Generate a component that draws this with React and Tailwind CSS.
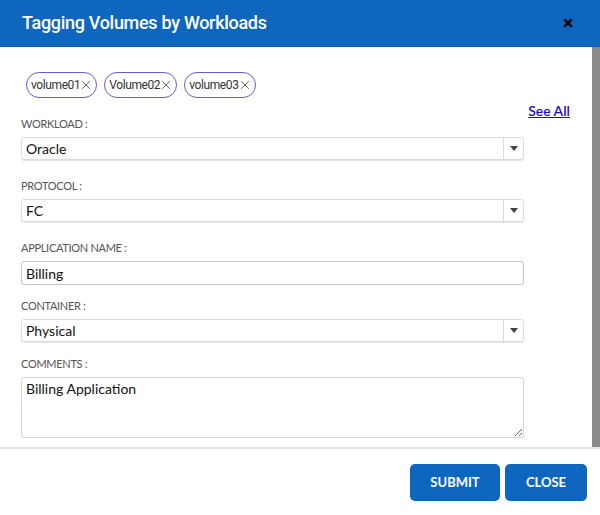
import { X } from "lucide-react";

const volumes = ["volume01", "Volume02", "volume03"];

const fields = [
  { label: "WORKLOAD :", value: "Oracle", type: "select", gap: "mt-0" },
  { label: "PROTOCOL :", value: "FC", type: "select", gap: "mt-[19px]" },
  { label: "APPLICATION NAME :", value: "Billing", type: "input", gap: "mt-[19px]" },
  { label: "CONTAINER :", value: "Physical", type: "select", gap: "mt-[14px]" },
];

function SelectBox({ value }) {
  return (
    <div className="flex h-[23px] w-[503px] items-stretch rounded-[3px] border border-[#dcdcdc] bg-white shadow-[0_1px_0_#e6e6e6]">
      <div className="flex flex-1 items-center pl-[4px] text-[14px] text-[#111]">{value}</div>
      <div className="flex w-[20px] items-center justify-center border-l border-[#dcdcdc]">
        <svg width="8" height="5" viewBox="0 0 8 5">
          <path d="M0 0h8L4 5z" fill="#444" />
        </svg>
      </div>
    </div>
  );
}

function InputBox({ value }) {
  return (
    <div className="flex h-[24px] w-[503px] items-center rounded-[3px] border border-[#c4c4c4] bg-white pl-[4px] text-[14px] text-[#111]">
      {value}
    </div>
  );
}

export default function App() {
  return (
    <div className="flex h-[515px] w-[600px] flex-col bg-white font-['Lato','Open_Sans',sans-serif]">
      <header className="flex h-[47px] shrink-0 items-center justify-between border-b border-[#0c5aad] bg-[#0f66bf] pl-[22px] pr-[26px]">
        <h1 className="pb-[2px] font-['Roboto',sans-serif] text-[18px] font-medium tracking-[-0.3px] text-white">
          Tagging Volumes by Workloads
        </h1>
        <X className="h-[12px] w-[12px] text-[#111]" strokeWidth={5.5} />
      </header>

      <div className="flex h-[400px] shrink-0">
        <div className="flex-1 pl-[21px] pr-[22px] pt-[25px]">
          <div className="flex gap-[7px] pl-[5px]">
            {volumes.map((v) => (
              <span
                key={v}
                className="flex h-[26px] items-center rounded-full border border-[#6a5acd] pl-[4px] pr-[3px] font-['Roboto',sans-serif] text-[12px] tracking-[-0.4px] text-[#333]"
              >
                {v}
                <X className="-ml-[1px] h-[14px] w-[14px] text-[#555]" strokeWidth={1.5} />
              </span>
            ))}
          </div>
          <div className="mt-[5px] flex justify-end">
            <a href="#" className="text-[14px] font-semibold leading-[16px] text-[#1a0dcc] underline">
              See All
            </a>
          </div>

          <div className="-mt-[2px] flex flex-col">
            {fields.map((f) => (
              <div key={f.label} className={f.gap}>
                <div className="mb-[6px] h-[14px] text-[11px] leading-[14px] tracking-[-0.3px] text-[#555]">{f.label}</div>
                {f.type === "select" ? <SelectBox value={f.value} /> : <InputBox value={f.value} />}
              </div>
            ))}
            <div className="mt-[15px]">
              <div className="mb-[6px] h-[14px] text-[11px] leading-[14px] tracking-[-0.3px] text-[#555]">COMMENTS :</div>
              <textarea
                readOnly
                defaultValue="Billing Application"
                className="block h-[61px] w-[503px] rounded-[3px] border border-[#d4d4d4] px-[4px] py-[2px] text-[14px] leading-[18px] text-[#111] outline-none"
              />
            </div>
          </div>
        </div>
        <div className="w-[8px] bg-[#8a8a8a]" />
      </div>

      <div className="flex flex-1 items-start justify-end gap-[5px] border-t-2 border-[#e4e4e4] pr-[13px] pt-[15px]">
        <button className="h-[37px] w-[90px] rounded-[5px] bg-[#0f66bf] text-[13px] font-bold text-white">
          SUBMIT
        </button>
        <button className="h-[37px] w-[82px] rounded-[5px] bg-[#0f66bf] text-[13px] font-bold text-white">
          CLOSE
        </button>
      </div>
    </div>
  );
}
